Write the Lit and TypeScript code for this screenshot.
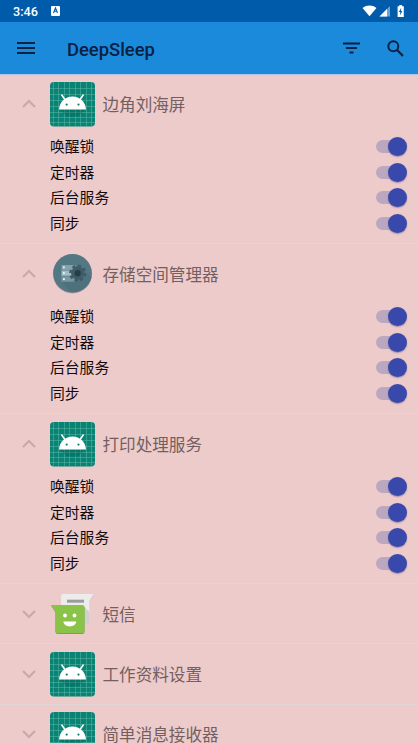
import { LitElement, html, svg, css } from 'lit';
import { customElement, property } from 'lit/decorators.js';

const OPTIONS = ['唤醒锁', '定时器', '后台服务', '同步'];

const APPS = [
  { name: '边角刘海屏', icon: 'android', open: true },
  { name: '存储空间管理器', icon: 'storage', open: true },
  { name: '打印处理服务', icon: 'android', open: true },
  { name: '短信', icon: 'sms', open: false },
  { name: '工作资料设置', icon: 'android', open: false },
  { name: '简单消息接收器', icon: 'android', open: false },
];

const COLUMNS = [3.5, 8.5, 14.5, 19.5, 25.5, 30.5, 36.5, 41.5];
const ROWS = [6.5, 12.5, 18.5, 24.5, 30.5, 35.5, 40.5];

const androidIcon = html`
  <svg width="45" height="45" viewBox="0 0 45 45">
    <rect width="45" height="44.600" rx="4" fill="#0a8374" />
    ${COLUMNS.map((x) => svg`<path d="M${x} 0V44.600" stroke="#5fb8a8" stroke-width=".5" />`)}
    ${ROWS.map((y) => svg`<path d="M0 ${y}H45" stroke="#5fb8a8" stroke-width=".5" />`)}
    <path d="M9.500 27.500h26l-8 7H17z" fill="#00594e" opacity=".3" />
    <path d="M14.500 17l-2.700-4M30.500 17l2.700-4" stroke="#fff" stroke-width="1.500" stroke-linecap="round" />
    <path d="M9 27.500C9.500 20 15 14.500 22.500 14.500S35.500 20 36 27.500z" fill="#fff" />
    <circle cx="16.700" cy="22.600" r="1.100" fill="#0a8374" />
    <circle cx="28.500" cy="22.600" r="1.100" fill="#0a8374" />
  </svg>
`;

const storageIcon = html`
  <svg width="45" height="45" viewBox="0 0 45 45">
    <circle cx="22.500" cy="21.800" r="19.600" fill="#455a64" opacity=".35" />
    <circle cx="22.500" cy="21.300" r="19.300" fill="#547883" />
    <path d="M11.500 30L20 40c10 1.500 19-5 21.500-15L35 20z" fill="#4e717d" />
    <path d="M11.500 13H26v5H11.500z" fill="#83a3ab" />
    <path d="M11.500 18.500H27v5.300H11.500z" fill="#a4bcc3" />
    <path d="M11.500 24.400H26v5.300H11.500z" fill="#7898a2" />
    <path d="M13 14.500h1.800v1.800H13zM13 20.300h1.800v1.800H13zM13 26.200h1.800v1.800H13z" fill="#e5fcff" />
    <circle cx="27.700" cy="21.200" r="6.600" fill="#3f5c68" />
    <circle cx="27.700" cy="21.200" r="7.300" fill="none" stroke="#3f5c68" stroke-width="2.600" stroke-dasharray="3.200 2.530" />
    <circle cx="27.700" cy="21.200" r="3.100" fill="#263d48" />
  </svg>
`;

const smsIcon = html`
  <svg width="45" height="45" viewBox="0 0 45 45">
    <path d="M13.500 2.800H43.500L39.500 10.500V29.500Q39.500 32 37 32H11V5.300Q11 2.800 13.500 2.800z" fill="#b5abab" opacity=".6" />
    <path d="M13.500 2H43.500L39.500 9.500V29Q39.500 31.500 37 31.500H11V4.500Q11 2 13.500 2z" fill="#ececec" />
    <path d="M34 14.500L39.500 20V29Q39.500 31.500 37 31.500H34z" fill="#d2d0cf" />
    <path d="M17 7.700h17v3H17z" fill="#9c9c9c" />
    <path d="M1 13.500H32Q34.500 13.500 34.500 16V39.500Q34.500 42 32 42H8Q5.500 42 5.500 39.500V20.500z" fill="#6f9c3d" />
    <path d="M1 13H32Q34.500 13 34.500 15.500V39Q34.500 41.300 32 41.300H8Q5.500 41.300 5.500 39V20z" fill="#8bc34a" />
    <circle cx="15" cy="23.500" r="1.900" fill="#fff" />
    <circle cx="24.500" cy="23.500" r="1.900" fill="#fff" />
    <path d="M13.300 29.500H26.300C25.300 36 14.300 36 13.300 29.500z" fill="#fff" />
  </svg>
`;

const ICONS: Record<string, unknown> = {
  android: androidIcon,
  storage: storageIcon,
  sms: smsIcon,
};

@customElement('toggle-switch')
export class ToggleSwitch extends LitElement {
  static styles = css`
    :host {
      display: grid;
      align-items: center;
      width: 31px;
      height: 19px;
    }
    .track,
    .thumb {
      grid-area: 1 / 1;
    }
    .track {
      width: 27px;
      height: 13px;
      border-radius: 6.5px;
      background: #bba8c0;
    }
    .thumb {
      justify-self: end;
      width: 19px;
      height: 19px;
      border-radius: 50%;
      background: #3949ab;
      box-shadow: 0 1px 1.5px rgba(40, 40, 120, 0.4);
    }
  `;

  render() {
    return html`
      <div class="track"></div>
      <div class="thumb"></div>
    `;
  }
}

@customElement('app-item')
export class AppItem extends LitElement {
  @property({ type: String }) name = '';
  @property({ type: String }) icon = 'android';
  @property({ type: Boolean }) open = false;

  static styles = css`
    :host {
      display: block;
      box-sizing: border-box;
      border-bottom: 1px solid #e2d6da;
      flex: none;
    }
    .header {
      display: flex;
      align-items: center;
      height: 59.3px;
      padding-left: 21px;
      color: #745f60;
      font-size: 16.6px;
    }
    .arrow {
      width: 15px;
      height: 10px;
      margin-right: 14px;
      fill: none;
      stroke: #c9a9ab;
      stroke-width: 2.2;
    }
    .icon {
      width: 45px;
      height: 45px;
      margin-right: 7.5px;
      padding-top: 1px;
    }
    .options {
      padding: 0.7px 11px 7px 50px;
    }
    .option {
      display: flex;
      align-items: center;
      justify-content: space-between;
      height: 25.5px;
      color: #120a0b;
      font-size: 14.8px;
    }
    .label {
      padding-bottom: 1.6px;
    }
  `;

  render() {
    return html`
      <div class="header">
        <svg class="arrow" viewBox="0 0 15 10">
          <path d=${this.open ? 'M2 8L8 2L14 8' : 'M2 2L8 8L14 2'} />
        </svg>
        <div class="icon">${ICONS[this.icon]}</div>
        <span>${this.name}</span>
      </div>
      ${this.open
        ? html`<div class="options">
            ${OPTIONS.map(
              (o) => html`<div class="option">
                <span class="label">${o}</span><toggle-switch></toggle-switch>
              </div>`
            )}
          </div>`
        : ''}
    `;
  }
}

@customElement('app-root')
export class AppRoot extends LitElement {
  static styles = css`
    :host {
      display: flex;
      flex-direction: column;
      height: 743px;
      overflow: hidden;
      background: #edcbcb;
      font-family: Roboto, 'Noto Sans CJK SC', sans-serif;
    }
    .status {
      display: flex;
      align-items: center;
      flex: none;
      height: 22px;
      padding: 0 12px 0 13px;
      background: #005caa;
      color: #fff;
      font-size: 12.7px;
      font-weight: 500;
    }
    .badge {
      width: 9px;
      height: 10px;
      margin-left: 13px;
    }
    .signals {
      margin-left: auto;
      width: 44px;
      height: 14px;
    }
    .toolbar {
      display: flex;
      align-items: center;
      box-sizing: border-box;
      flex: none;
      height: 52px;
      padding: 0 14px 0 17px;
      background: #1b8adb;
      box-shadow: 0 1px 1px #b9c0e2;
      color: #0a2142;
      z-index: 1;
    }
    .title {
      flex: 1;
      margin: 2px 0 0 32px;
      font-size: 18.4px;
      font-weight: 500;
    }
    .filter {
      margin-right: 27px;
    }
    .list {
      display: flex;
      flex-direction: column;
    }
  `;

  render() {
    return html`
      <div class="status">
        <span>3:46</span>
        <svg class="badge" viewBox="0 0 9 10">
          <rect width="9" height="10" rx="1" fill="#fff" />
          <path d="M2.500 7L4.500 2L6.500 7M3.300 5.300H5.700" fill="none" stroke="#005caa" stroke-width="1.100" />
        </svg>
        <svg class="signals" viewBox="0 0 44 14">
          <path d="M0.500 3.900C4.500 .6 10.500 .6 14.500 3.900L7.500 12.200z" fill="#fff" />
          <path d="M28 2V12.500H17.500z" fill="#6ba2d1" />
          <path d="M25 5V12.500H17.500z" fill="#fff" />
          <path d="M37.300 1h2.800v1.300h1.700V13h-6.200V2.300h1.700z" fill="#fff" />
          <path d="M39.200 3.800L36.900 8h1.300v3.300L40.300 7H39z" fill="#005caa" />
        </svg>
      </div>
      <div class="toolbar">
        <svg width="18" height="12" viewBox="0 0 18 12">
          <path d="M0 1H18M0 6H18M0 11H18" stroke="#0a2142" stroke-width="1.900" />
        </svg>
        <div class="title">DeepSleep</div>
        <svg class="filter" width="17" height="12" viewBox="0 0 17 12">
          <path d="M0 1.500H17M3 6H14M6.500 10.500H10.500" stroke="#0a2142" stroke-width="1.800" />
        </svg>
        <svg width="17" height="17" viewBox="0 0 17 17" fill="none" stroke="#0a2142">
          <circle cx="6.300" cy="6.300" r="5" stroke-width="1.900" />
          <path d="M9.800 9.800L16 16" stroke-width="2.200" />
        </svg>
      </div>
      <div class="list">
        ${APPS.map(
          (a) => html`<app-item .name=${a.name} .icon=${a.icon} .open=${a.open}></app-item>`
        )}
      </div>
    `;
  }
}
